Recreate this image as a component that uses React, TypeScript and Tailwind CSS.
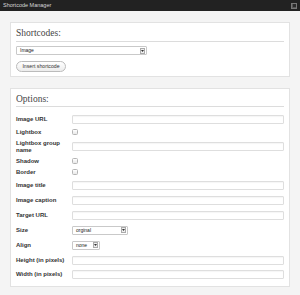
import React from 'react';

const sans = { fontFamily: '"Liberation Sans", Arial, sans-serif' };

function FakeSelect({ value, width }: { value: string; width: string }) {
  return (
    <div
      className={`flex h-[9px] items-center justify-between rounded-[1px] border border-[#c9c9c9] bg-white pl-[3px] pr-[1px] ${width}`}
    >
      <span className="text-[5px] leading-none text-[#222]">{value}</span>
      <span className="flex h-[6px] w-[5px] items-center justify-center border border-[#aaa] bg-[#eee]">
        <svg width="3" height="2" viewBox="0 0 3 2">
          <path d="M0 0 L3 0 L1.5 2 Z" fill="#333" />
        </svg>
      </span>
    </div>
  );
}

function TextInput() {
  return (
    <div className="h-[9px] flex-1 rounded-[1px] border border-[#dedede] bg-white shadow-[inset_0_1px_1px_rgba(0,0,0,0.04)]" />
  );
}

function Checkbox() {
  return (
    <div className="h-[6px] w-[6px] rounded-[1.5px] border border-[#b5b5b5] bg-gradient-to-b from-white to-[#e8e8e8]" />
  );
}

type Row = { label: React.ReactNode; h: string; kind: 'text' | 'check' | 'size' | 'align' };

const rows: Row[] = [
  { label: 'Image URL', h: 'h-[14px]', kind: 'text' },
  { label: 'Lightbox', h: 'h-[12px]', kind: 'check' },
  { label: <>Lightbox group<br />name</>, h: 'h-[17px]', kind: 'text' },
  { label: 'Shadow', h: 'h-[12px]', kind: 'check' },
  { label: 'Border', h: 'h-[10px]', kind: 'check' },
  { label: 'Image title', h: 'h-[16px]', kind: 'text' },
  { label: 'Image caption', h: 'h-[14px]', kind: 'text' },
  { label: 'Target URL', h: 'h-[16px]', kind: 'text' },
  { label: 'Size', h: 'h-[14px]', kind: 'size' },
  { label: 'Align', h: 'h-[16px]', kind: 'align' },
  { label: 'Height (in pixels)', h: 'h-[14px]', kind: 'text' },
  { label: 'Width (in pixels)', h: 'h-[14px]', kind: 'text' },
];

export default function App() {
  return (
    <div className="h-[295px] w-[300px] overflow-hidden bg-[#f4f4f4]" style={sans}>
      {/* title bar */}
      <div className="flex h-[11px] items-center justify-between bg-[#222] pl-[3px] pr-[3px]">
        <span className="text-[5.5px] leading-none text-[#d8d8d8]">Shortcode Manager</span>
        <span className="flex h-[6px] w-[6px] items-center justify-center border border-[#777] bg-[#555]">
          <span className="h-[3px] w-[3px] bg-[#2a2a2a]" />
        </span>
      </div>

      <div className="px-[10px] pt-[11px]">
        {/* shortcodes panel */}
        <div className="border border-[#e2e2e2] bg-white px-[5px] pb-[4px] pt-[4px]">
          <h2
            className="h-[12px] text-[9.5px] leading-[12px] text-[#464646]"
            style={{ fontFamily: '"Liberation Serif", Georgia, serif' }}
          >
            Shortcodes:
          </h2>
          <div className="mt-[2px] h-px bg-[#dcdcdc]" />
          <div className="mt-[4px]">
            <FakeSelect value="Image" width="w-[131px]" />
          </div>
          <button className="mt-[6px] flex h-[11px] w-[50px] items-center justify-center rounded-full border border-[#bbb] bg-gradient-to-b from-white to-[#ececec] text-[5.2px] leading-none text-[#333]">
            Insert shortcode
          </button>
        </div>

        {/* options panel */}
        <div className="mt-[11px] border border-[#e2e2e2] bg-white px-[5px] pb-[5px] pt-[4px]">
          <h2
            className="h-[12px] text-[9.5px] leading-[12px] text-[#464646]"
            style={{ fontFamily: '"Liberation Serif", Georgia, serif' }}
          >
            Options:
          </h2>
          <div className="mt-[1px] h-px bg-[#dcdcdc]" />
          <div className="mt-[5px]">
            {rows.map((row, i) => (
              <div key={i} className={`flex items-center ${row.h}`}>
                <div className="w-[56px] shrink-0 text-[6px] font-bold leading-[7px] text-[#333]">
                  {row.label}
                </div>
                {row.kind === 'text' && <TextInput />}
                {row.kind === 'check' && <Checkbox />}
                {row.kind === 'size' && <FakeSelect value="orginal" width="w-[56px]" />}
                {row.kind === 'align' && <FakeSelect value="none" width="w-[28px]" />}
              </div>
            ))}
          </div>
        </div>
      </div>
    </div>
  );
}
